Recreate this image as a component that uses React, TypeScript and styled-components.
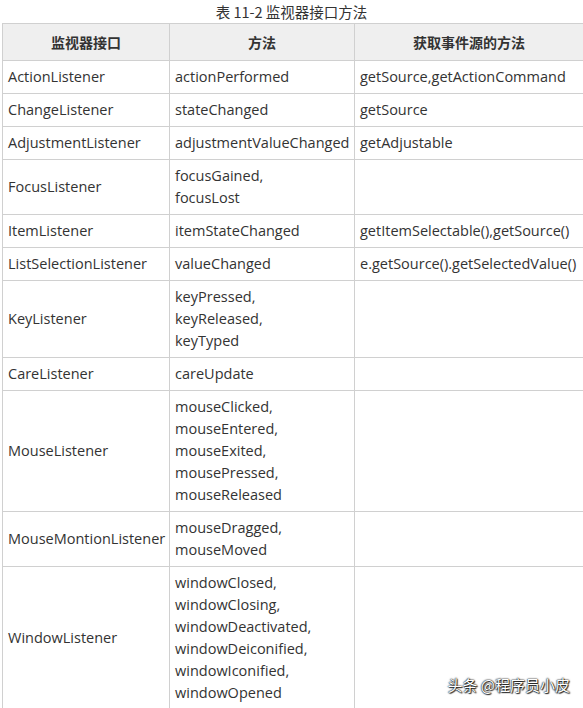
import React from "react";
import styled, { createGlobalStyle } from "styled-components";

const Global = createGlobalStyle`
  html, body { margin: 0; padding: 0; background: #fff; overflow: hidden; }
  body { width: 583px; height: 708px; }
`;

const Page = styled.div`
  position: relative;
  width: 583px;
  height: 708px;
  overflow: hidden;
  font-family: "Open Sans", "Noto Sans CJK SC", sans-serif;
  color: #333;
`;

const Caption = styled.div`
  height: 23px;
  line-height: 24px;
  text-align: center;
  font-size: 14.5px;
  color: #333;
  font-family: "Noto Sans CJK SC", sans-serif;
`;

const Table = styled.table`
  margin-left: 2px;
  width: 582px;
  border-collapse: collapse;
  table-layout: fixed;
  font-size: 14.5px;
`;

const Head = styled.th`
  background: #efefef;
  border: 1px solid #d0d0d0;
  height: 36px;
  padding: 0;
  font-weight: bold;
  font-family: "Noto Sans CJK SC", sans-serif;
  font-size: 14px;
  color: #333;
  text-align: center;
  vertical-align: middle;
`;

const Cell = styled.td`
  border: 1px solid #d0d0d0;
  padding: 5px 0 5px 5px;
  line-height: 22px;
  vertical-align: middle;
  white-space: nowrap;
  color: #333;
`;

const Line = styled.div`
  height: 22px;
`;

const Watermark = styled.div`
  position: absolute;
  right: 13px;
  bottom: 13px;
  font-family: "Noto Sans CJK SC", sans-serif;
  font-size: 15px;
  color: #fff;
  text-shadow: 0 0 2px #000, 0 0 1px #000, 1px 1px 1px #333;
`;

type Row = { iface: string; methods: string[]; source: string };

const rows: Row[] = [
  { iface: "ActionListener", methods: ["actionPerformed"], source: "getSource,getActionCommand" },
  { iface: "ChangeListener", methods: ["stateChanged"], source: "getSource" },
  { iface: "AdjustmentListener", methods: ["adjustmentValueChanged"], source: "getAdjustable" },
  { iface: "FocusListener", methods: ["focusGained,", "focusLost"], source: "" },
  { iface: "ItemListener", methods: ["itemStateChanged"], source: "getItemSelectable(),getSource()" },
  { iface: "ListSelectionListener", methods: ["valueChanged"], source: "e.getSource().getSelectedValue()" },
  { iface: "KeyListener", methods: ["keyPressed,", "keyReleased,", "keyTyped"], source: "" },
  { iface: "CareListener", methods: ["careUpdate"], source: "" },
  {
    iface: "MouseListener",
    methods: ["mouseClicked,", "mouseEntered,", "mouseExited,", "mousePressed,", "mouseReleased"],
    source: "",
  },
  { iface: "MouseMontionListener", methods: ["mouseDragged,", "mouseMoved"], source: "" },
  {
    iface: "WindowListener",
    methods: [
      "windowClosed,",
      "windowClosing,",
      "windowDeactivated,",
      "windowDeiconified,",
      "windowIconified,",
      "windowOpened",
    ],
    source: "",
  },
];

export default function App() {
  return (
    <Page>
      <Global />
      <Caption>表 11-2 监视器接口方法</Caption>
      <Table>
        <colgroup>
          <col style={{ width: 167 }} />
          <col style={{ width: 185 }} />
          <col />
        </colgroup>
        <thead>
          <tr>
            <Head>监视器接口</Head>
            <Head>方法</Head>
            <Head>获取事件源的方法</Head>
          </tr>
        </thead>
        <tbody>
          {rows.map((r) => (
            <tr key={r.iface}>
              <Cell>{r.iface}</Cell>
              <Cell>
                {r.methods.map((m) => (
                  <Line key={m}>{m}</Line>
                ))}
              </Cell>
              <Cell>{r.source}</Cell>
            </tr>
          ))}
        </tbody>
      </Table>
      <Watermark>头条 @程序员小皮</Watermark>
    </Page>
  );
}
